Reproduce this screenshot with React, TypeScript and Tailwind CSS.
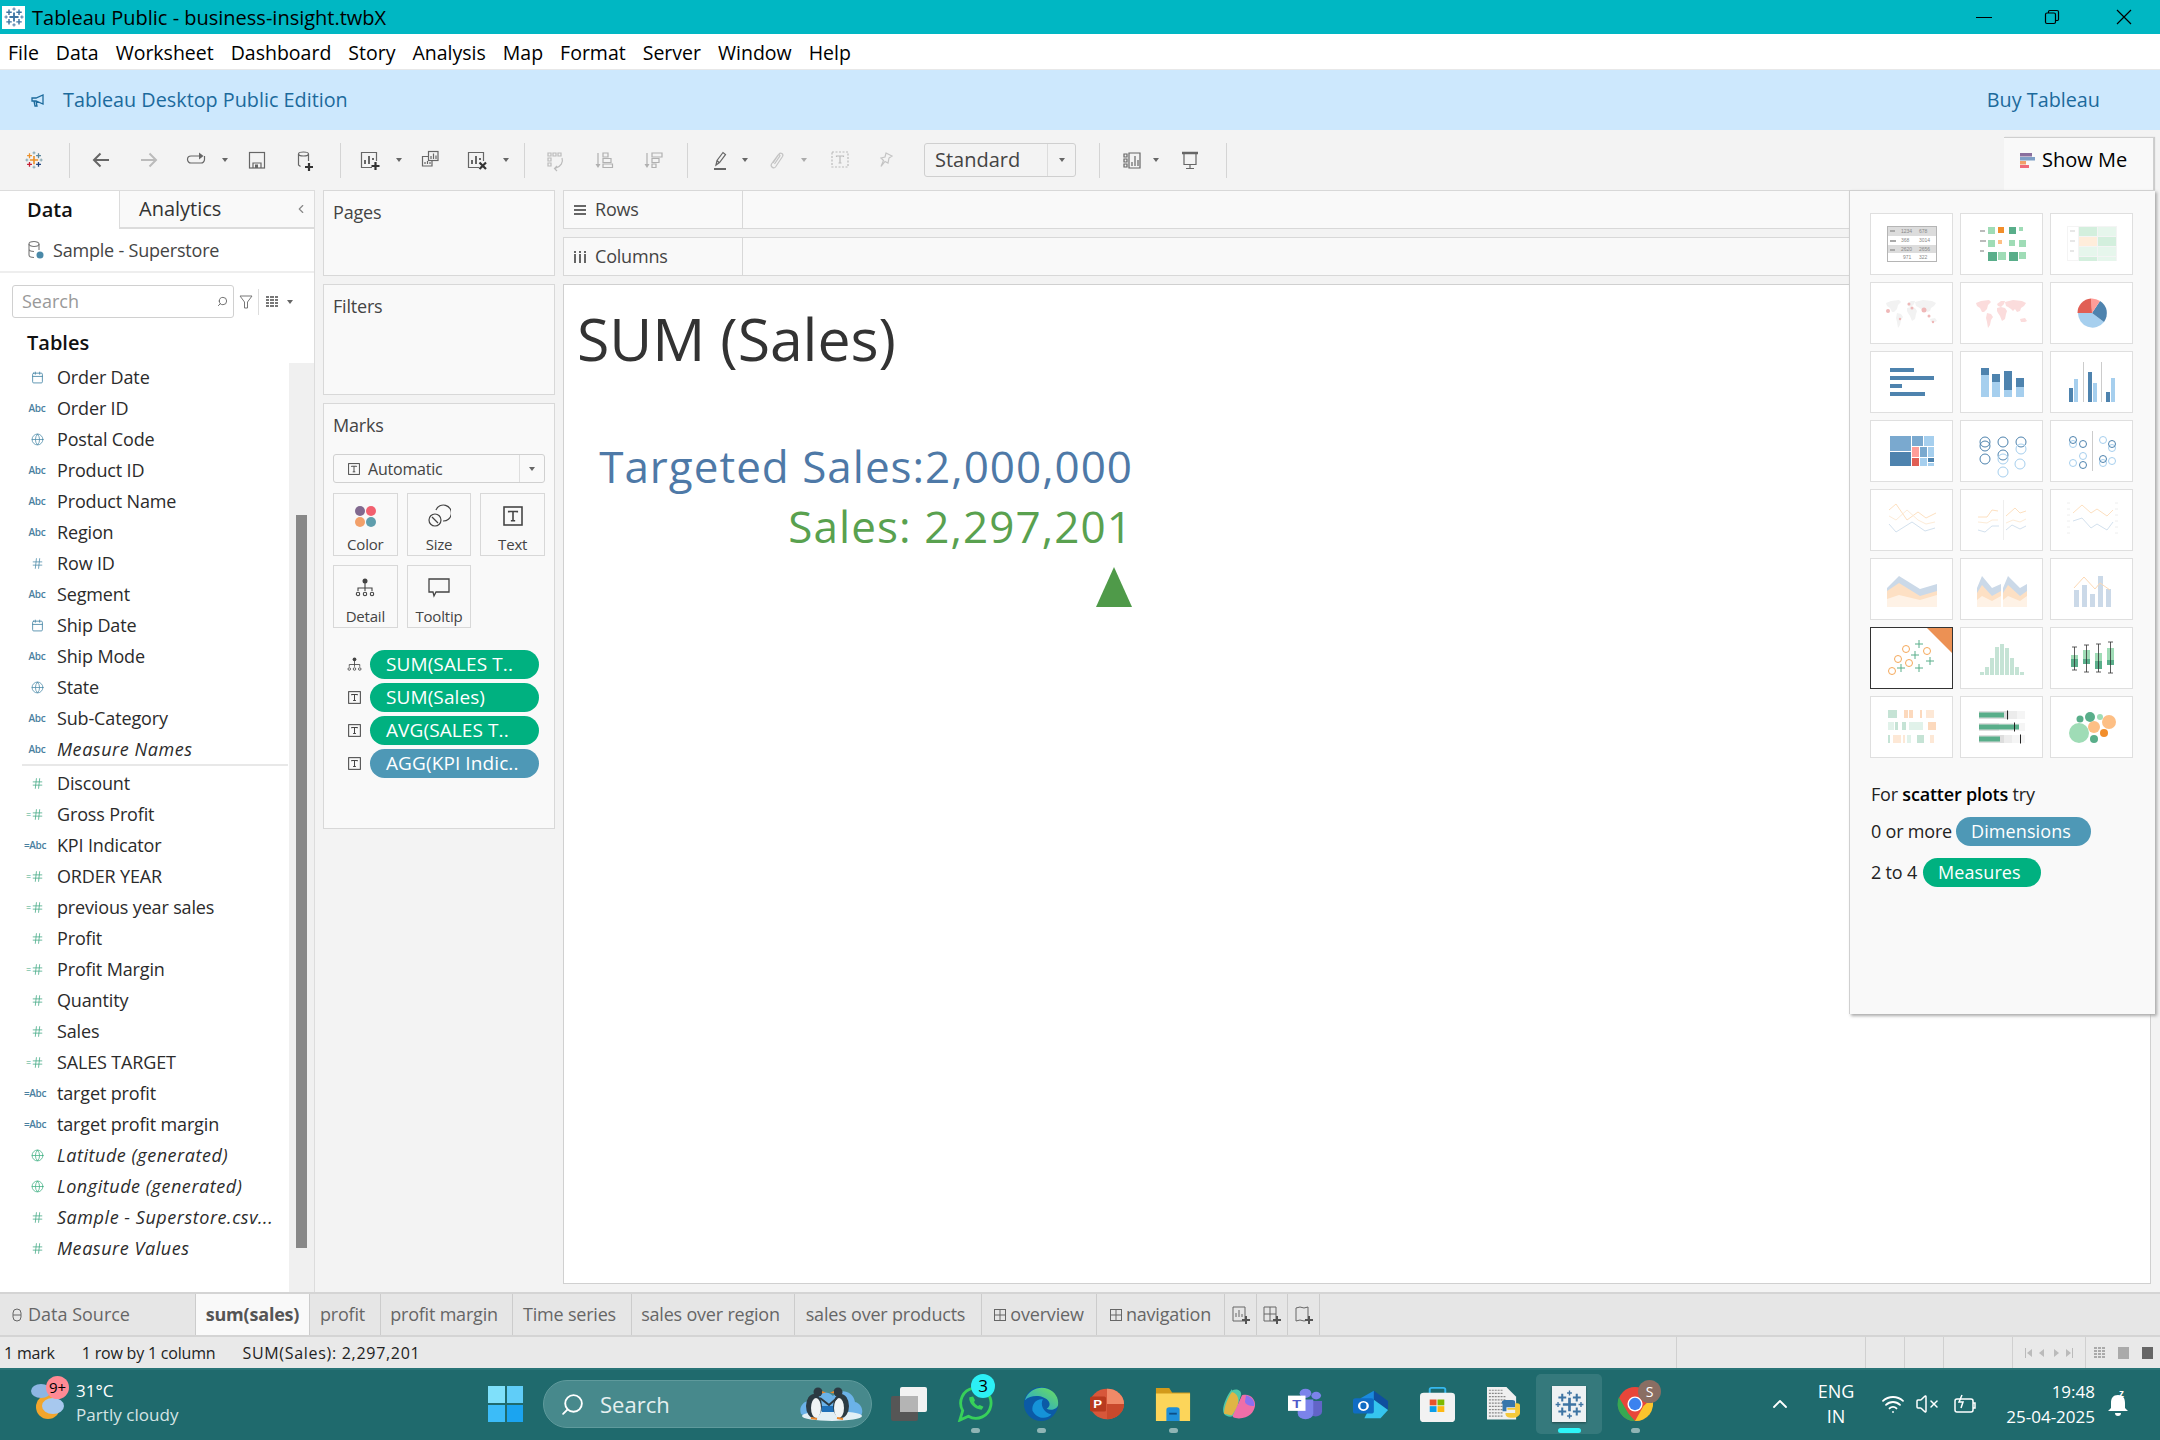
import type { ReactNode } from "react";
import { Globe, Calendar, Hash, Wifi, VolumeX, ChevronUp, ChevronLeft, Search } from "lucide-react";

const dark = "#4e83ae";
const light = "#a6cfee";
const mint = "#9fdcb6";
const green = "#59ae8a";
const orange = "#f28e2b";
const peach = "#fdbf85";

function Ico({ className = "", children }: { className?: string; children: ReactNode }) {
  return (
    <svg width="20" height="24" viewBox="0 0 20 24" fill="none" stroke="currentColor" strokeWidth="1.2" overflow="visible" className={`shrink-0 ${className}`}>
      {children}
    </svg>
  );
}

function Sep({ className = "" }: { className?: string }) {
  return <div className={`w-px h-[35px] bg-[#d4d4d4] shrink-0 ${className}`} />;
}

function Caret({ className = "" }: { className?: string }) {
  return (
    <svg width="8" height="6" viewBox="0 0 8 6" className={`shrink-0 ${className}`}>
      <path d="M1 1h6L4 5z" fill="#666" />
    </svg>
  );
}

function TableauLogo({ size = 20, colored = false }: { size?: number; colored?: boolean }) {
  const blue = "#3e74a3";
  const c = colored
    ? { mid: "#eb912b", tl: "#eb912b", tr: "#5b879b", bl: "#c72035", br: "#1f447e", tiny: "#7099a6" }
    : { mid: blue, tl: blue, tr: blue, bl: blue, br: blue, tiny: blue };
  return (
    <svg width={size} height={size} viewBox="0 0 24 24" fill="none" strokeWidth="1.7">
      <path d="M12 6.500v11M6.500 12h11" stroke={c.mid} strokeWidth="2.200" />
      <path d="M6 3v6.500M2.800 6.200h6.500" stroke={c.tl} />
      <path d="M18 3v6.500M14.800 6.200h6.500" stroke={c.tr} />
      <path d="M6 14.500V21M2.800 17.800h6.500" stroke={c.bl} />
      <path d="M18 14.500V21M14.800 17.800h6.500" stroke={c.br} />
      <path d="M12 0.500v4M10 2.500h4M12 19.500v4M10 21.500h4M0.500 12h4M2.500 10v4M19.500 12h4M21.500 10v4" stroke={c.tiny} strokeWidth="1.100" />
    </svg>
  );
}

function TitleBar() {
  return (
    <div className="h-[34px] bg-[#00b7c3] flex items-center shrink-0">
      <div className="w-[23px] h-[23px] ml-[2px] bg-white flex items-center justify-center">
        <TableauLogo size={20} />
      </div>
      <span className="ml-[7px] pt-[2px] text-[20px] text-black">Tableau Public - business-insight.twbX</span>
      <div className="ml-auto flex items-center text-black">
        <div className="w-[16px] h-px bg-black mr-[52px]" />
        <svg width="16" height="16" viewBox="0 0 16 16" fill="none" stroke="black" strokeWidth="1.2" className="mr-[56px]">
          <rect x="1.5" y="4" width="10" height="10.5" rx="1.5" />
          <path d="M4.5 4V2.8A1.3 1.3 0 0 1 5.8 1.5H13A1.5 1.5 0 0 1 14.5 3v7.2A1.3 1.3 0 0 1 13.2 11.5H11.5" />
        </svg>
        <svg width="16" height="16" viewBox="0 0 16 16" stroke="black" strokeWidth="1.2" className="mr-[28px]">
          <path d="M1 1l14 14M15 1L1 15" />
        </svg>
      </div>
    </div>
  );
}

function MenuBar() {
  const items = ["File", "Data", "Worksheet", "Dashboard", "Story", "Analysis", "Map", "Format", "Server", "Window", "Help"];
  return (
    <div className="h-[36px] bg-white border-b border-[#e8e8e8] flex items-center pl-[8px] pt-[2px] gap-[17px] text-[19.500px] text-black shrink-0">
      {items.map((m) => (
        <span key={m}>{m}</span>
      ))}
    </div>
  );
}

function Banner() {
  return (
    <div className="h-[60px] bg-[#cde8fd] flex items-center text-[19.800px] text-[#1c6a9c] shrink-0">
      <svg width="16" height="16" viewBox="0 0 16 16" fill="none" stroke="#1c6a9c" strokeWidth="1.3" className="ml-[30px]">
        <path d="M2 6h4l7-3v9L6 9H2zM4 9l1 5h2L6 9" />
      </svg>
      <span className="ml-[17px]">Tableau Desktop Public Edition</span>
      <span className="ml-auto mr-[60px]">Buy Tableau</span>
    </div>
  );
}

function Toolbar() {
  const plus = "#333";
  return (
    <div className="h-[60px] bg-[#f3f3f3] flex items-center shrink-0 relative text-[#666]">
      <div className="ml-[25px] flex">
        <TableauLogo size={18} colored />
      </div>
      <Sep className="ml-[26px]" />
      <Ico className="ml-[21px] text-[#666]"><path d="M18 12H3M9.500 5.500L3 12l6.500 6.500" strokeWidth="2" /></Ico>
      <Ico className="ml-[28px] text-[#bbb]"><path d="M2 12h15M10.500 5.500L17 12l-6.500 6.500" strokeWidth="2" /></Ico>
      <Ico className="ml-[27px]">
        <path d="M14 8H5a3.500 3.500 0 0 0 0 7h10a3.500 3.500 0 0 0 3.500-3.500V8" />
        <path d="M13 4.500l4.500 3.500-4.500 3.500z" fill="currentColor" stroke="none" />
      </Ico>
      <Caret className="ml-[15px]" />
      <Ico className="ml-[18px]">
        <rect x="2.500" y="4.500" width="15" height="15.500" />
        <path d="M6 20v-5h8v5" />
        <rect x="8" y="16.500" width="3" height="3.500" fill="currentColor" stroke="none" />
      </Ico>
      <Ico className="ml-[28px]">
        <ellipse cx="8.500" cy="6" rx="5" ry="2" />
        <path d="M3.500 6v11l2 1.500M13.500 6v7" />
        <path d="M14 15v8M10 19h8" stroke={plus} strokeWidth="2.200" />
      </Ico>
      <Sep className="ml-[25px]" />
      <Ico className="ml-[19px]">
        <path d="M12 19.500H1.500v-15h15V13" />
        <path d="M5 16v-4M9 16V8M13 12V10" strokeWidth="2" />
        <path d="M15.500 14v8M11.500 18h8" stroke={plus} strokeWidth="2.200" />
      </Ico>
      <Caret className="ml-[15px]" />
      <Ico className="ml-[17px]">
        <rect x="8.500" y="3.500" width="9.500" height="9" />
        <path d="M8.500 8.500H2.500v9.500h9.500v-5.500M11 11V8M13.500 11V5.500M16 11V7.500M5 16v-2M7.500 16v-3M10 16v-2" />
      </Ico>
      <Ico className="ml-[27px]">
        <path d="M12 19.500H1.500v-15h15V13" />
        <path d="M5 16v-4M9 16V8M13 12V10" strokeWidth="2" />
        <path d="M12.500 14.500l6.500 6.500M19 14.500L12.500 21" stroke={plus} strokeWidth="2.200" />
      </Ico>
      <Caret className="ml-[15px]" />
      <Sep className="ml-[14px]" />
      <Ico className="ml-[21px] text-[#bbb]">
        <path d="M2 5h3v3H2zM7 5h3v3H7zM12 5h3v3h-3zM2 10h3v3H2zM2 15h3v3H2zM16 10c1.500 4-1 9-7 10.500M11 18l-2.500 2.500L11 23" />
      </Ico>
      <Ico className="ml-[28px] text-[#b0b0b0]">
        <path d="M4 5v13" />
        <path d="M1.500 16h5L4 20z" fill="currentColor" stroke="none" />
        <path d="M9 5h5v4H9zM9 10.500h8v4H9zM9 16h9.500v3.500H9z" />
      </Ico>
      <Ico className="ml-[28px] text-[#b0b0b0]">
        <path d="M5 5v13" />
        <path d="M2.500 16h5L5 20z" fill="currentColor" stroke="none" />
        <path d="M10 5h10v4H10zM10 10.500h7v4h-7zM10 16h4v3.500h-4z" />
      </Ico>
      <Sep className="ml-[25px]" />
      <Ico className="ml-[22px]">
        <path d="M6 17l1-4.500 6-8 2.500 2-6 8zM7 12.500l2.500 2.500" />
        <path d="M4 21h12" strokeWidth="2" />
      </Ico>
      <Caret className="ml-[11px]" />
      <Ico className="ml-[18px] text-[#c4c4c4]"><path d="M6 15l6-9c1.500-2 5 0 3.500 2.500l-7 10.500c-1.500 2-5.500 0-4-3L11 7c.8-1 2.500 0 1.800 1.200L7.500 16" /></Ico>
      <Caret className="ml-[13px] opacity-50" />
      <Ico className="ml-[21px] text-[#bbb]"><path d="M3 4h16v15H3z" strokeDasharray="2 1.500" /><path d="M7.500 9V8h7v1M11 8v7M9.500 15h3" /></Ico>
      <Ico className="ml-[26px] text-[#c4c4c4]"><path d="M11 5l6 3-3 2-1 5-3-1.500-4 5 2.500-6L6 10l4-1z" /></Ico>
      <div className="ml-[29px] w-[152px] h-[34px] border border-[#cfcfcf] rounded-[3px] flex items-center shrink-0 text-[#444]">
        <span className="ml-[10px] text-[20px] flex-1">Standard</span>
        <div className="w-[28px] h-full border-l border-[#dcdcdc] flex items-center justify-center">
          <Caret />
        </div>
      </div>
      <Sep className="ml-[23px]" />
      <Ico className="ml-[22px]"><path d="M2 6h3v3H2zM2 11h3v3H2zM2 16h3v3H2zM7 5h11v15H7z" /><path d="M10 18v-4M13 18V8M16 18v-6" /></Ico>
      <Caret className="ml-[10px]" />
      <Ico className="ml-[20px]"><path d="M2 5h16" strokeWidth="2.500" /><path d="M4 5.500h12v11H4zM10 16.500v4M6 20.500h8" /></Ico>
      <Sep className="ml-[26px]" />
      <div className="ml-auto mr-[6px] self-end w-[150px] h-[53px] bg-[#f9f9f9] border-t border-r border-[#cfcfcf] flex items-center pb-[8px] shadow-[1px_0_1px_#ccc] relative">
        <svg width="15" height="15" viewBox="0 0 15 15" className="ml-[16px]">
          <rect x="0" y="0" width="12" height="3.500" fill="#8a6f9e" />
          <rect x="0" y="4" width="15" height="3.500" fill="#7f9fc6" />
          <rect x="0" y="8" width="6" height="3.500" fill="#f2a06a" />
          <rect x="0" y="12" width="9" height="3" fill="#ef6b7a" />
        </svg>
        <span className="ml-[7px] text-[20px] text-black">Show Me</span>
      </div>
    </div>
  );
}

type Field = { name: string; icon: string; italic?: boolean };
const dims: Field[] = [
  { name: "Order Date", icon: "date" },
  { name: "Order ID", icon: "abc" },
  { name: "Postal Code", icon: "geo" },
  { name: "Product ID", icon: "abc" },
  { name: "Product Name", icon: "abc" },
  { name: "Region", icon: "abc" },
  { name: "Row ID", icon: "hash" },
  { name: "Segment", icon: "abc" },
  { name: "Ship Date", icon: "date" },
  { name: "Ship Mode", icon: "abc" },
  { name: "State", icon: "geo" },
  { name: "Sub-Category", icon: "abc" },
  { name: "Measure Names", icon: "abc", italic: true },
];
const measures: Field[] = [
  { name: "Discount", icon: "num" },
  { name: "Gross Profit", icon: "calc" },
  { name: "KPI Indicator", icon: "calcabc" },
  { name: "ORDER YEAR", icon: "calc" },
  { name: "previous year sales", icon: "calc" },
  { name: "Profit", icon: "num" },
  { name: "Profit Margin", icon: "calc" },
  { name: "Quantity", icon: "num" },
  { name: "Sales", icon: "num" },
  { name: "SALES TARGET", icon: "calc" },
  { name: "target profit", icon: "calcabc" },
  { name: "target profit margin", icon: "calcabc" },
  { name: "Latitude (generated)", icon: "geogreen", italic: true },
  { name: "Longitude (generated)", icon: "geogreen", italic: true },
  { name: "Sample - Superstore.csv...", icon: "num", italic: true },
  { name: "Measure Values", icon: "num", italic: true },
];

function FieldIcon({ kind }: { kind: string }) {
  if (kind === "date") return <Calendar size={13} strokeWidth={1.6} className="text-[#4a89a8]" />;
  if (kind === "geo") return <Globe size={13} strokeWidth={1.4} className="text-[#4a89a8]" />;
  if (kind === "geogreen") return <Globe size={13} strokeWidth={1.4} className="text-[#3fb083]" />;
  if (kind === "hash") return <Hash size={13} strokeWidth={1.4} className="text-[#4a89a8]" />;
  if (kind === "num") return <Hash size={13} strokeWidth={1.4} className="text-[#3fa883]" />;
  if (kind === "abc") return <span className="text-[10px] font-semibold text-[#4a7f9f] tracking-[-0.3px]">Abc</span>;
  if (kind === "calc")
    return (
      <span className="flex items-center text-[#3fa883] -ml-[4px]">
        <span className="text-[9px] leading-none">=</span>
        <Hash size={13} strokeWidth={1.4} />
      </span>
    );
  return <span className="text-[10px] font-semibold text-[#4a7f9f] tracking-[-0.4px] -ml-[4px]">=Abc</span>;
}

function FieldRow({ f }: { f: Field }) {
  return (
    <div className="h-[31px] flex items-center shrink-0">
      <div className="w-[57px] pl-[22px] pr-[5px] flex justify-center">
        <FieldIcon kind={f.icon} />
      </div>
      <span className={`text-[18px] whitespace-nowrap text-[#2b2b2b] ${f.italic ? "italic tracking-[0.55px]" : "tracking-[-0.15px]"}`}>{f.name}</span>
    </div>
  );
}

function DataPane() {
  return (
    <div className="w-[315px] h-full bg-white border-r border-[#dcdcdc] shrink-0 flex flex-col relative">
      <div className="h-[39px] flex shrink-0 border-t border-[#dcdcdc]">
        <div className="w-[119px] flex items-center pl-[27px] text-[20px] font-semibold text-[#111] bg-white">Data</div>
        <div className="flex-1 flex items-center bg-[#f9f9f9] border-l border-b-2 border-[#dcdcdc] pl-[19px] text-[20px] text-[#333]">
          Analytics
          <ChevronLeft size={14} className="ml-auto mr-[6px] text-[#888]" />
        </div>
      </div>
      <div className="h-[44px] flex items-center border-b-2 border-[#eeeeee] shrink-0 pl-[28px]">
        <svg width="16" height="20" viewBox="0 0 16 20" fill="none" stroke="#777" strokeWidth="1.100">
          <ellipse cx="6" cy="4" rx="5" ry="2.500" />
          <path d="M1 4v11c0 1.500 2 2.500 5 2.500M11 4v6M1 9c0 1.500 2 2.500 5 2.500" />
          <circle cx="12" cy="15" r="3.500" fill="#4a89a8" stroke="none" />
        </svg>
        <span className="ml-[9px] text-[18px] text-[#444] tracking-[-0.2px]">Sample - Superstore</span>
      </div>
      <div className="flex items-center mt-[12px] ml-[12px] shrink-0">
        <div className="w-[222px] h-[33px] border border-[#d0d0d0] rounded-[3px] flex items-center pl-[9px] pr-[5px]">
          <span className="text-[18px] text-[#999]">Search</span>
          <Search size={11} className="ml-auto text-[#666] -scale-x-100" />
        </div>
        <svg width="16" height="16" viewBox="0 0 16 16" fill="none" stroke="#777" className="ml-[4px]">
          <path d="M2 2h12L9.500 8v6h-3V8z" />
        </svg>
        <div className="w-px h-[26px] bg-[#dddddd] ml-[4px]" />
        <div className="grid grid-cols-3 gap-px w-[12px] ml-[7px]">
          {Array.from({ length: 12 }).map((_, i) => (
            <div key={i} className="h-[2px] bg-[#777]" />
          ))}
        </div>
        <Caret className="ml-[8px]" />
      </div>
      <div className="mt-[12px] pl-[27px] text-[20px] font-semibold text-[#111] shrink-0 leading-[26px]">Tables</div>
      <div className="mt-[6px] flex flex-col w-[288px]">
        {dims.map((f) => (
          <FieldRow key={f.name} f={f} />
        ))}
        <div className="h-[2px] bg-[#e8e8e8] ml-[22px] mb-[2px] -mt-[1px] shrink-0" />
        {measures.map((f) => (
          <FieldRow key={f.name} f={f} />
        ))}
      </div>
      <div className="absolute left-[289px] top-[173px] bottom-0 w-[25px] bg-[#f0f0f0]">
        <div className="absolute left-[7px] w-[11px] top-[152px] h-[733px] bg-[#888888]" />
      </div>
    </div>
  );
}

function Card({ title, className = "", children }: { title: string; className?: string; children?: ReactNode }) {
  return (
    <div className={`bg-[#f9f9f9] border border-[#d8d8d8] shrink-0 ${className}`}>
      <div className="pl-[9px] pt-[8px] text-[18px] leading-[26px] text-[#444] tracking-[-0.2px]">{title}</div>
      {children}
    </div>
  );
}

function MarkBtn({ label, children }: { label: string; children: ReactNode }) {
  return (
    <div className="h-[63px] border border-[#d8d8d8] flex flex-col items-center pt-[9px]">
      <div className="h-[26px] flex items-center">{children}</div>
      <span className="mt-[5px] text-[15px] leading-[20px] text-[#444] tracking-[-0.2px]">{label}</span>
    </div>
  );
}

function TBox({ size = 13 }: { size?: number }) {
  return (
    <svg width={size} height={size} viewBox="0 0 14 14" fill="none" stroke="#444" strokeWidth="1.100">
      <rect x="0.700" y="0.700" width="12.600" height="12.600" />
      <path d="M4 4.500V3.800h6v.7M7 3.800v6.500M5.500 10.300h3" />
    </svg>
  );
}

function DetailIcon({ size = 20 }: { size?: number }) {
  return (
    <svg width={size} height={size} viewBox="0 0 20 20" fill="none" stroke="#444" strokeWidth="1.100">
      <circle cx="10" cy="3" r="2.500" fill="#444" stroke="none" />
      <path d="M10 5v8M3 13v-3h14v3" />
      <circle cx="3" cy="16" r="1.700" />
      <circle cx="10" cy="16" r="1.700" />
      <circle cx="17" cy="16" r="1.700" />
    </svg>
  );
}

function Pill({ children, blue }: { children: ReactNode; blue?: boolean }) {
  return (
    <div className={`w-[169px] h-[29px] rounded-full flex items-center pl-[16px] text-[19px] text-white whitespace-nowrap tracking-[0.1px] ${blue ? "bg-[#4e98b6]" : "bg-[#00b180]"}`}>
      {children}
    </div>
  );
}

function CardsColumn() {
  const pills = [
    { icon: <DetailIcon size={15} />, label: "SUM(SALES T..", blue: false },
    { icon: <TBox />, label: "SUM(Sales)", blue: false },
    { icon: <TBox />, label: "AVG(SALES T..", blue: false },
    { icon: <TBox />, label: "AGG(KPI Indic..", blue: true },
  ];
  return (
    <div className="w-[232px] ml-[8px] flex flex-col gap-[8px] shrink-0">
      <Card title="Pages" className="h-[86px]" />
      <Card title="Filters" className="h-[111px]" />
      <Card title="Marks" className="h-[426px]">
        <div className="mx-[9px] mt-[16px] h-[29px] border border-[#d0d0d0] rounded-[3px] flex items-center">
          <div className="ml-[14px] flex"><TBox size={12} /></div>
          <span className="ml-[8px] text-[16px] text-[#444] flex-1 tracking-[-0.2px]">Automatic</span>
          <div className="w-[25px] h-full border-l border-[#dedede] flex items-center justify-center"><Caret /></div>
        </div>
        <div className="mx-[9px] mt-[10px] grid grid-cols-3 gap-x-[9px] gap-y-[9px]">
          <MarkBtn label="Color">
            <div className="grid grid-cols-2 gap-[1px]">
              <div className="w-[10px] h-[10px] rounded-full bg-[#81698f]" />
              <div className="w-[10px] h-[10px] rounded-full bg-[#f2606f]" />
              <div className="w-[10px] h-[10px] rounded-full bg-[#f2a06a]" />
              <div className="w-[10px] h-[10px] rounded-full bg-[#5f9ead]" />
            </div>
          </MarkBtn>
          <MarkBtn label="Size">
            <svg width="24" height="24" viewBox="0 0 24 24" fill="none" stroke="#444" strokeWidth="1.200">
              <path d="M9 6a8 8 0 1 1 7 11" />
              <circle cx="8" cy="16" r="6" />
              <path d="M5 13l6 6" />
            </svg>
          </MarkBtn>
          <MarkBtn label="Text"><TBox size={20} /></MarkBtn>
          <MarkBtn label="Detail"><DetailIcon /></MarkBtn>
          <MarkBtn label="Tooltip">
            <svg width="22" height="20" viewBox="0 0 22 20" fill="none" stroke="#444" strokeWidth="1.300">
              <path d="M1 1h20v13H8l-2 4-1-4H1z" />
            </svg>
          </MarkBtn>
        </div>
        <div className="mt-[22px] flex flex-col gap-[4px]">
          {pills.map((p) => (
            <div key={p.label} className="flex items-center">
              <div className="w-[46px] pl-[14px] flex justify-center"><div className="flex">{p.icon}</div></div>
              <Pill blue={p.blue}>{p.label}</Pill>
            </div>
          ))}
        </div>
      </Card>
    </div>
  );
}

function Shelf({ label, icon }: { label: string; icon: ReactNode }) {
  return (
    <div className="h-[39px] border border-[#d8d8d8] bg-[#f9f9f9] flex items-center shrink-0">
      <div className="w-[179px] h-full border-r border-[#d8d8d8] flex items-center pl-[9px]">
        {icon}
        <span className="ml-[8px] text-[18px] text-[#444] tracking-[-0.2px]">{label}</span>
      </div>
    </div>
  );
}

function ViewArea() {
  return (
    <div className="w-[1589px] ml-[8px] h-[1094px] flex flex-col gap-[8px] shrink-0">
      <Shelf
        label="Rows"
        icon={
          <svg width="14" height="12" viewBox="0 0 14 12" fill="#666">
            <rect x="1" y="1" width="12" height="2" />
            <rect x="1" y="5" width="12" height="2" />
            <rect x="1" y="9" width="12" height="2" />
          </svg>
        }
      />
      <Shelf
        label="Columns"
        icon={
          <svg width="14" height="14" viewBox="0 0 14 14" fill="#666">
            <rect x="1" y="1" width="2" height="2" />
            <rect x="6" y="1" width="2" height="2" />
            <rect x="11" y="1" width="2" height="2" />
            <rect x="1" y="4" width="2" height="9" />
            <rect x="6" y="4" width="2" height="9" />
            <rect x="11" y="4" width="2" height="9" />
          </svg>
        }
      />
      <div className="flex-1 bg-white border border-[#d0d0d0] pl-[13px] pt-[13px] w-[1588px]">
        <div className="text-[59px] leading-[80px] text-[#333] -tracking-[0.1px]">SUM (Sales)</div>
        <div className="w-[556px] mt-[58px] flex flex-col items-end">
          <div className="text-[44px] leading-[60px] text-[#4e79a7] whitespace-nowrap tracking-[1px]">Targeted Sales:2,000,000</div>
          <div className="text-[44px] leading-[60px] text-[#59a14f] whitespace-nowrap tracking-[1.100px]">Sales: 2,297,201</div>
          <svg width="36" height="40" viewBox="0 0 36 40" className="mt-[11px] mr-[1px]">
            <path d="M18 0l18 40H0z" fill="#4f9a49" />
          </svg>
        </div>
      </div>
    </div>
  );
}

function Thumb({ selected, children }: { selected?: boolean; children: ReactNode }) {
  return (
    <div className={`h-[62px] bg-white border ${selected ? "border-[#333]" : "border-[#dfdfdf]"}`}>
      <svg viewBox="1 1 81 60" width="81" height="60" className="block">
        {children}
      </svg>
    </div>
  );
}

type R = [number, number, number, number, string];
function Rects({ d, o }: { d: R[]; o?: number }) {
  return (
    <g opacity={o}>
      {d.map((r, i) => (
        <rect key={i} x={r[0]} y={r[1]} width={r[2]} height={r[3]} fill={r[4]} />
      ))}
    </g>
  );
}

function Line({ p, c, w = 1, o = 1 }: { p: string; c: string; w?: number; o?: number }) {
  return <polyline points={p} fill="none" stroke={c} strokeWidth={w} opacity={o} />;
}

function Rings({ d, c }: { d: number[][]; c: string }) {
  return (
    <g fill="none" stroke={c} strokeWidth="1">
      {d.map((r, i) => (
        <circle key={i} cx={r[0]} cy={r[1]} r={r[2]} />
      ))}
    </g>
  );
}

const land = [
  "M16 21l5-2 8-1 2 2-3 3-1 4-3 3-2 0-2-4-3-2z",
  "M27 31l4 1 2 3-2 3-1 5-2 3-1-6-1-4z",
  "M37 22l4-3 4 0-1 3-3 3-3-1z",
  "M37 26l4-1 4 1 2 3-1 3-1 5-3 2-2-5-2-3-1-2z",
  "M45 20l8-2 9 1 4 2-2 3-3 2-1 3-3 1-2-3-2 2-2-2-3-2-2-1z",
  "M60 37l5-1 2 3-2 1-4 0z",
];

function Maps({ fill }: { fill: string }) {
  return (
    <g fill={fill}>
      {land.map((d) => (
        <path key={d} d={d} />
      ))}
    </g>
  );
}

function ThumbGrid() {
  return (
    <div className="grid grid-cols-3 gap-[7px] w-[263px]">
      <Thumb>
        <Rects d={[[18, 14, 48, 9, "#dcdcdc"], [18, 32, 48, 8, "#dcdcdc"], [20, 17, 5, 2, "#aaa"], [20, 27, 6, 2, "#aaa"], [20, 36, 5, 2, "#aaa"]]} />
        <rect x="17.500" y="13.500" width="49" height="35" fill="none" stroke="#b5b5b5" />
        <g fontSize="5" fill="#888" fontFamily="Liberation Sans">
          <text x="31" y="20">1234</text><text x="49" y="20">678</text>
          <text x="31" y="29">368</text><text x="49" y="29">3014</text>
          <text x="31" y="38">2620</text><text x="49" y="38">2656</text>
          <text x="33" y="46">971</text><text x="49" y="46">322</text>
        </g>
      </Thumb>
      <Thumb>
        <Rects d={[[20, 17, 5, 2, "#bbb"], [20, 27, 6, 2, "#bbb"], [20, 37, 4, 2, "#bbb"], [28, 14, 7, 7, mint], [38, 14, 6, 6, orange], [49, 14, 7, 7, green], [59, 14, 4, 4, mint], [28, 27, 7, 7, mint], [38, 27, 4, 4, peach], [49, 27, 6, 6, mint], [59, 27, 7, 7, mint], [28, 39, 9, 9, green], [38, 39, 8, 8, mint], [49, 39, 9, 9, green], [59, 39, 7, 7, mint]]} />
      </Thumb>
      <Thumb>
        <Rects o={0.45} d={[[17, 13, 50, 35, "#e8e8e8"], [18, 14, 10, 33, "#fff"], [20, 17, 5, 2, "#ccc"], [20, 27, 5, 2, "#ccc"], [20, 37, 4, 2, "#ccc"], [29, 14, 18, 9, mint], [48, 14, 18, 9, "#c8ecd6"], [29, 24, 18, 9, "#ffd9b0"], [48, 24, 18, 9, mint], [29, 34, 18, 9, "#c8ecd6"], [48, 34, 18, 9, "#c8ecd6"], [29, 44, 18, 4, mint], [48, 44, 18, 4, "#c8ecd6"]]} />
      </Thumb>
      <Thumb>
        <Maps fill="#f2f2f2" />
        <g fill="#efb8b8">
          <circle cx="18" cy="29" r="2" /><circle cx="39" cy="22" r="1.500" /><circle cx="54" cy="28" r="2.500" /><circle cx="42" cy="26" r="1.500" /><circle cx="59" cy="34" r="1.500" /><circle cx="30" cy="37" r="1.200" /><circle cx="63" cy="40" r="1.200" />
        </g>
      </Thumb>
      <Thumb>
        <Maps fill="#fbdcdc" />
      </Thumb>
      <Thumb>
        <path d="M42 31L28 31A14.500 14.500 0 0 0 54 40z" fill={light} />
        <path d="M42 31L54 40A14.500 14.500 0 0 0 50 19z" fill={dark} />
        <path d="M42 31L50 19A14.500 14.500 0 0 0 41 16.500z" fill="#ff9d98" />
        <path d="M42 31L41 16.500A14.500 14.500 0 0 0 27.500 31z" fill="#e15f55" />
      </Thumb>
      <Thumb>
        <Rects d={[[20, 17, 24, 4, dark], [20, 25, 44, 4, dark], [20, 33, 12, 4, dark], [20, 41, 35, 4, dark]]} />
      </Thumb>
      <Thumb>
        <Rects d={[[21, 17, 8, 7, dark], [21, 24, 8, 22, light], [32, 23, 8, 8, dark], [32, 31, 8, 15, light], [44, 20, 8, 19, dark], [44, 39, 8, 7, light], [56, 27, 8, 9, dark], [56, 36, 8, 10, light]]} />
      </Thumb>
      <Thumb>
        <Rects d={[[33, 11, 1, 40, "#ccc"], [51, 11, 1, 40, "#ccc"], [19, 37, 4, 14, dark], [24, 28, 4, 23, light], [38, 21, 4, 30, dark], [43, 32, 4, 19, light], [56, 41, 4, 10, dark], [61, 27, 4, 24, light]]} />
      </Thumb>
      <Thumb>
        <Rects d={[[20, 16, 21, 15, "#7aa9cf"], [20, 32, 21, 14, dark], [42, 16, 11, 10, "#7aa9cf"], [54, 16, 10, 10, light], [42, 27, 7, 10, "#ff9d98"], [42, 38, 7, 8, "#e15f55"], [50, 27, 7, 10, "#7aa9cf"], [58, 27, 6, 10, light], [50, 38, 7, 8, light], [58, 38, 6, 4, dark], [58, 43, 6, 3, light]]} />
      </Thumb>
      <Thumb>
        <Rings c={dark} d={[[25, 22, 5], [25, 26, 5], [25, 39, 5], [43, 22, 5], [43, 35, 5], [61, 22, 5]]} />
        <Rings c={light} d={[[43, 39, 5], [61, 29, 5], [60, 44, 5], [43, 52, 5]]} />
      </Thumb>
      <Thumb>
        <rect x="42" y="11" width="1" height="40" fill="#ccc" />
        <Rings c={light} d={[[23, 24, 3.500], [33, 36, 3.500], [23, 43, 3.500], [53, 20, 3.500], [53, 43, 3.500], [62, 41, 3.500], [62, 28, 3.500]]} />
        <Rings c={dark} d={[[23, 20, 3.500], [33, 24, 3.500], [33, 45, 3.500], [62, 24, 3.500], [53, 39, 3.500]]} />
      </Thumb>
      <Thumb>
        <Line p="19,21 26,15 37,31 48,23 56,29 66,24" c="#fde0c0" />
        <Line p="19,27 26,31 37,21 48,31 56,35 65,33" c="#fdecd8" />
        <Line p="19,35 26,43 42,33 55,42 65,39" c="#d3e1ee" />
      </Thumb>
      <Thumb>
        <rect x="43" y="11" width="1" height="40" fill="#eee" />
        <Line p="18,28 27,28 32,21 38,22" c="#fde0c0" />
        <Line p="18,33 27,34 32,31 38,31" c="#fdecd8" />
        <Line p="18,41 25,43 32,37 39,37" c="#d3e1ee" />
        <Line p="46,27 55,19 60,24 66,22" c="#fde0c0" />
        <Line p="46,34 53,31 60,33 66,30" c="#fdecd8" />
        <Line p="46,41 52,36 60,40 66,37" c="#d3e1ee" />
      </Thumb>
      <Thumb>
        <Line p="23,24 32,16 41,24 47,20 57,27 63,21" c="#fde0c0" />
        <Line p="23,32 32,29 41,39 47,35 57,41 63,33" c="#d3e1ee" />
        <g stroke="#eee">
          {[14, 20, 26, 32, 38, 44].map((y) => (
            <g key={y}><path d={`M17 ${y}h3M65 ${y}h3`} /></g>
          ))}
        </g>
      </Thumb>
      <Thumb>
        <path d="M17 30L29 18 50 31 67 26V49H17z" fill="#cbd9e8" />
        <path d="M17 33L29 25 50 38 67 33V49H17z" fill="#fde0c4" />
        <path d="M17 41L29 37 50 42 67 37V49H17z" fill="#fef2e6" />
      </Thumb>
      <Thumb>
        <path d="M17 30L22 18 32 30 41 26V49H17z" fill="#cbd9e8" />
        <path d="M17 35L22 27 32 38 41 33V49H17z" fill="#fde0c4" />
        <path d="M17 42L22 38 32 43 41 38V49H17z" fill="#fef2e6" />
        <path d="M43 30L48 18 60 30 67 26V49H43z" fill="#cbd9e8" />
        <path d="M43 35L48 27 60 38 67 33V49H43z" fill="#fde0c4" />
        <path d="M43 42L48 38 60 43 67 38V49H43z" fill="#fef2e6" />
      </Thumb>
      <Thumb>
        <Rects d={[[24, 32, 5, 17, "#cbd9e8"], [32, 27, 5, 22, "#cbd9e8"], [40, 36, 5, 13, "#cbd9e8"], [48, 18, 5, 31, "#cbd9e8"], [56, 31, 5, 18, "#cbd9e8"]]} />
        <Line p="24,30 34,19 45,31 50,25 60,32" c="#fdd9b5" />
      </Thumb>
      <Thumb selected>
        <Rings c="#f5a85a" d={[[36, 22, 3.500], [57, 24, 3.500], [28, 32, 3.500], [39, 36, 3.500], [22, 44, 3.500]]} />
        <g stroke={green} strokeWidth="1" fill="none">
          <path d="M49 13v8M45 17h8M45 24v8M41 28h8M60 30v8M56 34h8M31 37v8M27 41h8M49 37v8M45 41h8" />
        </g>
        <path d="M56 0H83V27z" fill="#ec9154" />
      </Thumb>
      <Thumb>
        <Rects d={[[20, 45, 4, 3], [25, 40, 4, 8], [30, 31, 4, 17], [35, 20, 4, 28], [40, 17, 4, 31], [45, 21, 4, 27], [50, 31, 4, 17], [55, 40, 4, 8], [60, 45, 4, 3]].map((r) => [r[0], r[1], r[2], r[3], "#c5e3d5"] as R)} />
      </Thumb>
      <Thumb>
        <Rects d={[[21, 28, 7, 4, mint], [21, 32, 7, 8, green], [33, 23, 7, 9, mint], [33, 32, 7, 5, green], [45, 26, 7, 8, mint], [45, 34, 7, 8, green], [57, 21, 7, 12, mint], [57, 33, 7, 5, green]]} />
        <g stroke="#333" strokeWidth="0.800" fill="none">
          <path d="M24.500 20v23M22 20h5M22 43h5M36.500 18v27M34 18h5M34 45h5M48.500 17v28M46 17h5M46 45h5M60.500 15v31M58 15h5M58 46h5" />
        </g>
      </Thumb>
      <Thumb>
        <Rects d={[[18, 14, 9, 8, "#c5e3d5"], [34, 14, 4, 8, "#fcd9bd"], [39, 14, 4, 8, "#fcd9bd"], [50, 14, 2, 8, "#fcd9bd"], [56, 14, 8, 8, "#fde8d6"], [18, 26, 6, 8, "#e1f2ea"], [25, 26, 3, 8, "#c5e3d5"], [32, 26, 4, 8, "#c5e3d5"], [39, 26, 14, 8, "#e1f2ea"], [58, 26, 8, 8, "#fcd9bd"], [18, 39, 2, 8, "#c5e3d5"], [23, 39, 8, 8, "#fde8d6"], [33, 39, 2, 8, "#fde8d6"], [37, 39, 4, 8, "#e1f2ea"], [47, 39, 7, 8, "#c5e3d5"], [60, 39, 4, 8, "#fde8d6"]]} />
      </Thumb>
      <Thumb>
        <Rects d={[[19, 15, 30, 8, "#dddddd"], [49, 15, 8, 8, "#ececec"], [57, 15, 8, 8, "#f5f5f5"], [19, 27, 20, 8, "#dddddd"], [39, 27, 14, 8, "#ececec"], [53, 27, 12, 8, "#f5f5f5"], [19, 39, 25, 8, "#dddddd"], [44, 39, 8, 8, "#ececec"], [52, 39, 13, 8, "#f5f5f5"], [19, 16.500, 25, 5, green], [19, 28.500, 40, 5, green], [19, 40.500, 21, 5, green], [47, 14.500, 1, 9, "#222"], [54, 26.500, 1, 9, "#222"], [60, 38.500, 1, 9, "#222"]]} />
      </Thumb>
      <Thumb>
        <circle cx="29" cy="37" r="10" fill={mint} />
        <circle cx="44" cy="31" r="6" fill={peach} />
        <circle cx="59" cy="26" r="7" fill={peach} />
        <circle cx="40" cy="21" r="5" fill={green} />
        <circle cx="30" cy="23" r="3.500" fill={green} />
        <circle cx="50" cy="21" r="3" fill={mint} />
        <circle cx="54" cy="37" r="4" fill={orange} />
        <circle cx="44" cy="43" r="4" fill={green} />
      </Thumb>
    </div>
  );
}

function Hint({ children, blue }: { children: ReactNode; blue?: boolean }) {
  return (
    <span className={`inline-flex h-[29px] rounded-full items-center pl-[15px] pr-[20px] text-[18px] text-white tracking-[0.1px] ${blue ? "bg-[#4e98b6]" : "bg-[#00b180]"}`}>
      {children}
    </span>
  );
}

function ShowMePanel() {
  return (
    <div className="absolute right-[5px] top-0 w-[306px] h-[824px] bg-[#f9f9f9] border-l border-t border-[#d0d0d0] shadow-[2px_2px_3px_#aaaaaa] pl-[20px] pt-[22px]">
      <ThumbGrid />
      <div className="mt-[23px] pl-[1px] text-[18px] text-[#222] leading-[26px] tracking-[-0.2px]">
        For <b className="font-semibold text-black">scatter plots</b> try
      </div>
      <div className="mt-[10px] pl-[1px] flex items-center gap-[4px] text-[18px] text-[#222] tracking-[-0.2px]">
        0 or more <Hint blue>Dimensions</Hint>
      </div>
      <div className="mt-[12px] pl-[1px] flex items-center gap-[6px] text-[18px] text-[#222] tracking-[-0.2px]">
        2 to 4 <Hint>Measures</Hint>
      </div>
    </div>
  );
}

function Tab({ className = "", active, children }: { className?: string; active?: boolean; children: ReactNode }) {
  return (
    <div className={`h-full flex items-center justify-center shrink-0 text-[18px] whitespace-nowrap tracking-[-0.2px] border-r border-[#cccccc] ${active ? "bg-[#f9f9f9] font-bold text-[#555]" : "text-[#666]"} ${className}`}>
      {children}
    </div>
  );
}

function DashGlyph() {
  return (
    <svg width="12" height="12" viewBox="0 0 12 12" fill="none" stroke="#666" className="mr-[4px]">
      <rect x="0.500" y="0.500" width="11" height="11" />
      <path d="M6 0v12M0 6h12" />
    </svg>
  );
}

function AddSheet({ kind }: { kind: number }) {
  return (
    <svg width="20" height="20" viewBox="0 0 20 20" fill="none" stroke="#666">
      {kind === 0 && <path d="M2 2h12v14H2zM5 12V8M8 12V5M11 12V9" />}
      {kind === 1 && <path d="M2 2h12v14H2zM8 2v14M2 9h12" />}
      {kind === 2 && <path d="M2 3l4-1 4 1 4-1v13l-4 1-4-1-4 1z" />}
      <path d="M15 11v8M11 15h8" stroke="#555" strokeWidth="2" />
    </svg>
  );
}

function TabBar() {
  return (
    <div className="h-[45px] bg-[#e6e6e6] border-y-2 border-[#d4d4d4] flex shrink-0">
      <Tab className="w-[196px] justify-start! pl-[12px] tracking-normal!">
        <svg width="10" height="14" viewBox="0 0 10 14" fill="none" stroke="#666" className="mr-[6px]">
          <rect x="1" y="1" width="8" height="12" rx="4" />
          <path d="M1 7h8" />
        </svg>
        Data Source
      </Tab>
      <Tab active className="w-[114px]">sum(sales)</Tab>
      <Tab className="w-[71px] pr-[5px]">profit</Tab>
      <Tab className="w-[132px] pr-[5px]">profit margin</Tab>
      <Tab className="w-[119px] pr-[5px]">Time series</Tab>
      <Tab className="w-[163px] pr-[5px]">sales over region</Tab>
      <Tab className="w-[187px] pr-[5px]">sales over products</Tab>
      <Tab className="w-[115px]"><DashGlyph />overview</Tab>
      <Tab className="w-[128px]"><DashGlyph />navigation</Tab>
      <Tab className="w-[32px]"><AddSheet kind={0} /></Tab>
      <Tab className="w-[31px]"><AddSheet kind={1} /></Tab>
      <Tab className="w-[32px]"><AddSheet kind={2} /></Tab>
    </div>
  );
}

function StatusBar() {
  return (
    <div className="h-[31px] bg-[#e9e9e9] flex items-center text-[16px] text-[#222] shrink-0 tracking-[-0.2px]">
      <span className="ml-[4px]">1 mark</span>
      <span className="ml-[27px]">1 row by 1 column</span>
      <span className="ml-[27px] tracking-[0.7px]">SUM(Sales): 2,297,201</span>
      <div className="ml-auto flex h-full items-center">
        <div className="w-[189px] h-full border-l border-[#d0d0d0]" />
        <div className="w-[39px] h-full border-l border-[#d0d0d0]" />
        <div className="w-[39px] h-full border-l border-[#d0d0d0]" />
        <div className="w-[69px] h-full border-l border-[#d0d0d0]" />
        <div className="w-[73px] h-full border-l border-[#d0d0d0] flex items-center justify-center gap-[7px]">
          <svg width="50" height="12" viewBox="0 0 50 12" fill="#bbb">
            <path d="M1 1h1v10H1zM8 2v8L3 6zM20 2v8l-5-4zM30 2v8l5-4zM42 2v8l5-4zM48 1h1v10h-1z" />
          </svg>
        </div>
        <div className="w-[75px] h-full border-l border-[#d0d0d0] flex items-center justify-center gap-[13px]">
          <div className="grid grid-cols-3 gap-px w-[11px]">
            {Array.from({ length: 12 }).map((_, i) => (
              <div key={i} className="h-[2px] bg-[#aaa]" />
            ))}
          </div>
          <div className="w-[11px] h-[12px] bg-[#aaa]" />
          <div className="w-[11px] h-[12px] bg-[#666]" />
        </div>
      </div>
    </div>
  );
}

function TaskIcon({ dot, active, children }: { dot?: boolean; active?: boolean; children: ReactNode }) {
  return (
    <div className={`w-[66px] h-[60px] shrink-0 flex items-center justify-center relative rounded-[5px] ${active ? "bg-white/10" : ""}`}>
      {children}
      {dot && <div className="absolute bottom-[1px] w-[9px] h-[5px] rounded-full bg-[#8fb5b5]" />}
      {active && <div className="absolute bottom-[1px] w-[23px] h-[5px] rounded-full bg-[#2ef5f8]" />}
    </div>
  );
}

function Taskbar() {
  return (
    <div className="h-[72px] bg-[#1f6a6d] shadow-[inset_0_2px_0_#2a7477] flex items-center text-white shrink-0 relative">
      <div className="w-[76px] h-full relative shrink-0">
        <svg width="40" height="44" viewBox="0 0 40 44" className="absolute left-[28px] top-[8px]">
          <circle cx="20" cy="31" r="12" fill="#f2a52c" />
          <ellipse cx="13" cy="15" rx="10" ry="7" fill="#8db6e3" />
          <ellipse cx="25" cy="30" rx="11" ry="8" fill="#a7c8ee" />
        </svg>
        <div className="absolute left-[46px] top-[8px] w-[23px] h-[23px] rounded-full bg-[#ff8a94] flex items-center justify-center text-[15px] text-black">9+</div>
      </div>
      <div className="w-[412px] shrink-0 text-[17px] leading-[24px] tracking-[0.05px] -mt-[2px] mb-0">
        <div>31°C</div>
        <div className="text-[#d5e4e4]">Partly cloudy</div>
      </div>
      <div className="grid grid-cols-2 gap-[2px] w-[35px] shrink-0">
        <div className="h-[17px] bg-[#7fe0fa]" />
        <div className="h-[17px] bg-[#60cdf8]" />
        <div className="h-[17px] bg-[#3cbcf8]" />
        <div className="h-[17px] bg-[#1ba4f0]" />
      </div>
      <div className="ml-[20px] w-[329px] h-[48px] rounded-full bg-[#47898c] border border-[#5f9a9c] flex items-center shrink-0">
        <Search size={25} strokeWidth={1.800} className="ml-[16px] text-white -scale-x-100" />
        <span className="ml-[15px] text-[22px] text-[#e6f0f0]">Search</span>
        <svg width="64" height="36" viewBox="0 0 64 36" className="ml-auto mr-[8px]">
          <path d="M2 28C-1 20 6 13 14 15 18 6 28 4 34 10c6-8 20-6 22 6 8 2 9 12 5 14-20 4-48 4-59-2z" fill="#6bb2e8" />
          <ellipse cx="33" cy="30" rx="30" ry="5" fill="#e2eff5" />
          <rect x="23" y="20" width="15" height="6" fill="#1f70b8" />
          <ellipse cx="15" cy="20" rx="8" ry="12" fill="#2c3a42" />
          <ellipse cx="17" cy="22" rx="5" ry="10" fill="#f0f4f5" />
          <circle cx="19" cy="6" r="4.500" fill="#2c3a42" />
          <path d="M23 5l4 1.500-4 1z" fill="#e8862c" />
          <ellipse cx="42" cy="20" rx="8" ry="12" fill="#2c3a42" />
          <ellipse cx="40" cy="22" rx="5" ry="10" fill="#f0f4f5" />
          <circle cx="39" cy="6" r="4.500" fill="#2c3a42" />
          <path d="M35 5l-4 1.500 4 1z" fill="#e8862c" />
          <path d="M21 12l9 7 8-7" fill="none" stroke="#2c3a42" strokeWidth="2" />
          <path d="M12 32l6 1M38 32l6 1" stroke="#e8862c" strokeWidth="2" />
        </svg>
      </div>
      <div className="ml-[19px] w-[36px] h-[34px] relative shrink-0">
        <div className="absolute right-0 top-0 w-[27px] h-[25px] rounded-[2px] bg-[#f2f2f2]" />
        <div className="absolute left-0 bottom-0 w-[27px] h-[25px] rounded-[2px] bg-[#565656]" />
        <div className="absolute left-[9px] top-[9px] w-[18px] h-[16px] bg-[#b4b4b4]" />
      </div>
      <div className="ml-[15px] flex shrink-0">
        <TaskIcon dot>
          <svg width="36" height="36" viewBox="0 0 38 38" fill="none">
            <path d="M3 36l3-10A16 16 0 1 1 12 32z" stroke="#37d05a" strokeWidth="3" />
            <path d="M13 12c-1 6 6 13 13 13l2-3-4-2-2 1c-2-1-3-2-4-4l1-2-2-4z" fill="#37d05a" />
          </svg>
          <div className="absolute left-[29px] top-[0px] w-[24px] h-[24px] rounded-full bg-[#2cf0f5] flex items-center justify-center text-[17px] text-black">3</div>
        </TaskIcon>
        <TaskIcon dot>
          <svg width="36" height="36" viewBox="0 0 38 38">
            <defs>
              <linearGradient id="edgeTop" x1="0" y1="1" x2="1" y2="0">
                <stop offset="0" stopColor="#1b9de2" />
                <stop offset="1" stopColor="#6fe05a" />
              </linearGradient>
            </defs>
            <circle cx="19" cy="19" r="18" fill="#0b5aa6" />
            <path d="M2 15C6 3 18 0 26 3c8 3 12 10 11 17-1 5-8 6-12 4 3-2 4-5 2-8-4-6-18-8-25-1z" fill="url(#edgeTop)" />
            <path d="M10 26c-1-7 4-13 11-12-3 5 0 14 9 16-6 6-16 4-20-4z" fill="#1593d8" />
          </svg>
        </TaskIcon>
        <TaskIcon>
          <svg width="34" height="32" viewBox="0 0 36 38" preserveAspectRatio="none">
            <circle cx="18" cy="19" r="18" fill="#d7573a" />
            <path d="M18 1a18 18 0 0 1 18 18H18z" fill="#f08a68" />
            <path d="M18 19h18a18 18 0 0 1-18 18z" fill="#c9492c" />
            <rect x="0" y="10" width="17" height="18" rx="2" fill="#b83a1e" />
            <text x="3.500" y="24" fontSize="14" fontWeight="700" fill="#fff" fontFamily="Liberation Sans">P</text>
          </svg>
        </TaskIcon>
        <TaskIcon dot>
          <svg width="36" height="33" viewBox="0 0 38 36" preserveAspectRatio="none">
            <path d="M1 0h14l3 5h19v31H1z" fill="#d29a1a" />
            <rect x="1" y="6" width="36" height="30" fill="#fcd55a" />
            <path d="M12 24a3 3 0 0 1 3-3h8a3 3 0 0 1 3 3v12H12z" fill="#1f8fd8" />
            <rect x="15" y="27" width="8" height="2" fill="#0d4f86" />
          </svg>
        </TaskIcon>
        <TaskIcon>
          <svg width="34" height="31" viewBox="0 0 34 40" preserveAspectRatio="none">
            <path d="M10 2c4-3 10-1 9 6L13 32c-2 6-9 4-11 0-3-6 2-22 8-32z" fill="#4ec7a8" />
            <path d="M10 4c6 2 8 10 5 20l-5 10c-3 0-6-2-8-2 0-8 4-22 8-28z" fill="#f0b23a" opacity=".9" />
            <path d="M20 8c8-3 14 5 13 14-1 8-6 16-16 16-5 0-7-2-6-4l9-26z" fill="#ef6ea8" />
            <path d="M24 8c6 2 9 8 8 14-4 0-9-2-9-6z" fill="#8b6ff0" />
          </svg>
        </TaskIcon>
        <TaskIcon>
          <svg width="35" height="32" viewBox="0 0 36 42" preserveAspectRatio="none">
            <circle cx="29" cy="10" r="5" fill="#7b83eb" />
            <path d="M22 17h13v14a6 6 0 0 1-13 0z" fill="#6264c7" />
            <circle cx="18" cy="7" r="6" fill="#7b83eb" />
            <path d="M10 15h16v18a8 8 0 0 1-16 0z" fill="#7b83eb" />
            <rect x="0" y="10" width="18" height="20" fill="#ffffff" />
            <text x="4.500" y="26" fontSize="15" fontWeight="700" fill="#5059c9" fontFamily="Liberation Sans">T</text>
          </svg>
        </TaskIcon>
        <TaskIcon>
          <svg width="36" height="29" viewBox="0 0 38 42" preserveAspectRatio="none">
            <path d="M22 1l15 15v13L22 14z" fill="#0f4f9e" />
            <path d="M22 1L8 12v6h14z" fill="#1a8ae0" />
            <path d="M22 14l15 15-8 12H12z" fill="#35c5ee" />
            <rect x="0" y="12" width="22" height="22" rx="3" fill="#0f6cc4" />
            <ellipse cx="11" cy="23" rx="4.500" ry="6" fill="none" stroke="#fff" strokeWidth="2.500" />
          </svg>
        </TaskIcon>
        <TaskIcon>
          <svg width="35" height="35" viewBox="0 0 36 42" preserveAspectRatio="none">
            <path d="M10 8V3a2 2 0 0 1 2-2h12a2 2 0 0 1 2 2v5" fill="none" stroke="#35b8ef" strokeWidth="2" />
            <rect x="0" y="7" width="36" height="35" rx="4" fill="#f2f2f2" />
            <rect x="10" y="15" width="7" height="7" fill="#e8532c" />
            <rect x="18" y="15" width="7" height="7" fill="#7fba00" />
            <rect x="10" y="23" width="7" height="7" fill="#0b9ee8" />
            <rect x="18" y="23" width="7" height="7" fill="#fdb813" />
          </svg>
        </TaskIcon>
        <TaskIcon>
          <svg width="33" height="34" viewBox="0 0 34 42" preserveAspectRatio="none">
            <path d="M0 0h20l10 12v28H0z" fill="#f0f0f0" />
            <path d="M2 4h14M2 8h14M2 12h18M2 16h18M2 20h14M2 24h14M2 28h14M2 32h14M2 36h14" stroke="#888" strokeWidth="1.500" strokeDasharray="2 1" />
            <path d="M18 16h8a3 3 0 0 1 3 3v6H20v5h-4v-9a3 3 0 0 1 2-5z" fill="#3776ab" />
            <path d="M29 20h2a3 3 0 0 1 3 3v9c0 3-3 6-8 6s-7-2-7-6h10v-4h-8v-2h8z" fill="#f5c93b" />
          </svg>
        </TaskIcon>
        <TaskIcon active>
          <div className="w-[34px] h-[36px] bg-[#eef1f3] flex items-center justify-center shadow-[0_1px_2px_#00000066]">
            <TableauLogo size={29} />
          </div>
        </TaskIcon>
        <TaskIcon dot>
          <svg width="36" height="36" viewBox="0 0 38 38">
            <circle cx="19" cy="19" r="18" fill="#e8463a" />
            <path d="M19 37A18 18 0 0 1 2 12l10 17z" fill="#37a852" />
            <path d="M37 13a18 18 0 0 1-18 24l9-16z" fill="#fbc42c" />
            <circle cx="19" cy="19" r="8" fill="#fff" />
            <circle cx="19" cy="19" r="6.500" fill="#3b82ef" />
          </svg>
          <div className="absolute left-[36px] top-[6px] w-[23px] h-[23px] rounded-full bg-[#8a6e63] flex items-center justify-center text-[14px] text-white">S</div>
        </TaskIcon>
      </div>
      <ChevronUp size={24} strokeWidth={1.800} className="ml-[100px] text-white shrink-0" />
      <div className="ml-[11px] w-[66px] text-center text-[18px] leading-[25px] shrink-0">
        <div>ENG</div>
        <div>IN</div>
      </div>
      <Wifi size={24} strokeWidth={1.800} className="ml-[12px] shrink-0" />
      <VolumeX size={24} strokeWidth={1.500} className="ml-[10px] shrink-0" />
      <svg width="24" height="24" viewBox="0 0 24 24" fill="none" stroke="white" strokeWidth="1.500" className="ml-[14px] shrink-0">
        <rect x="2" y="7" width="18" height="13" rx="2" />
        <path d="M20 11h2v5h-2M9 3L6 10h4l-2 6" />
      </svg>
      <div className="ml-auto text-right text-[17px] leading-[25px] shrink-0 mr-[12px]">
        <div>19:48</div>
        <div>25-04-2025</div>
      </div>
      <svg width="22" height="30" viewBox="0 0 22 30" fill="white" className="mr-[31px] shrink-0">
        <path d="M11 6c5 0 7 3 7 8v5l3 3H1l3-3v-5c0-5 2-8 7-8zM8 24h6a3 3 0 0 1-6 0z" />
        <text x="12" y="8" fontSize="10" fontWeight="700" fontFamily="Liberation Sans">z</text>
      </svg>
    </div>
  );
}

export default function App() {
  return (
    <div className="w-[2160px] h-[1440px] flex flex-col overflow-hidden [font-family:'Open_Sans',sans-serif]">
      <TitleBar />
      <MenuBar />
      <Banner />
      <Toolbar />
      <div className="h-[1102px] bg-[#f3f3f3] flex relative shrink-0">
        <DataPane />
        <CardsColumn />
        <ViewArea />
        <ShowMePanel />
      </div>
      <TabBar />
      <StatusBar />
      <Taskbar />
    </div>
  );
}
